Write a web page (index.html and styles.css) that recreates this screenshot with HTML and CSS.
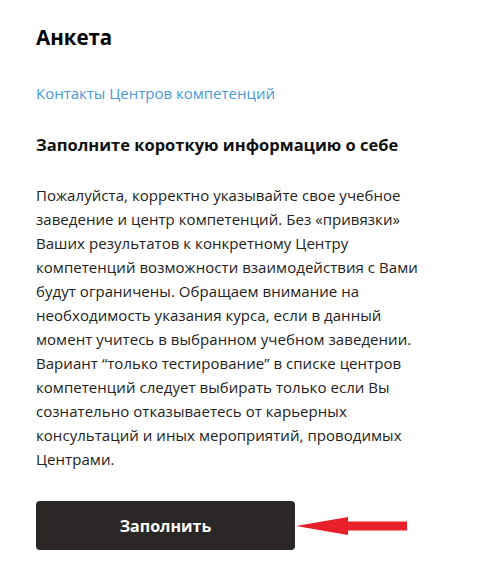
FILE: index.html
```html
<!DOCTYPE html>
<html lang="ru">
    <head>
        <meta charset="UTF-8" />
        <meta name="viewport" content="width=device-width, initial-scale=1.0" />
        <title>Анкета</title>
        <link rel="stylesheet" href="styles.css">
    </head>
    <body>
        <main class="survey">
            <h1 class="survey-title">Анкета</h1>
            <a class="survey-link" href="#">Контакты Центров компетенций</a>
            <h2 class="survey-subtitle">Заполните короткую информацию о себе</h2>
            <p class="survey-text">
                Пожалуйста, корректно указывайте свое учебное заведение и центр компетенций.
                Без «привязки» Ваших результатов к конкретному Центру компетенций возможности
                взаимодействия с Вами будут ограничены. Обращаем внимание на необходимость
                указания курса, если в данный момент учитесь в выбранном учебном заведении.
                Вариант “только тестирование” в списке центров компетенций следует выбирать
                только если Вы сознательно отказываетесь от карьерных консультаций и иных
                мероприятий, проводимых Центрами.
            </p>
            <div class="survey-action">
                <button class="fill-button" type="button">Заполнить</button>
                <svg class="arrow" width="112" height="18" viewBox="0 0 112 18">
                    <polygon points="0,9 52,0 52,4.5 111,4.5 111,13.5 52,13.5 52,18" fill="#e8202a" />
                </svg>
            </div>
        </main>
    </body>
</html>
```

FILE: styles.css
```css
* {
    margin: 0;
    padding: 0;
    box-sizing: border-box;
}
body {
    font-family: "Open Sans", "DejaVu Sans", sans-serif;
    background: #ffffff;
    color: #222222;
}
.survey {
    display: flex;
    flex-direction: column;
    align-items: flex-start;
    padding: 23px 36px 0;
}
.survey-title {
    color: #000000;
    font-size: 20.5px;
    font-weight: 700;
    line-height: 28px;
}
.survey-link {
    margin-top: 32px;
    color: #4a9ad8;
    font-size: 15px;
    line-height: 20px;
    text-decoration: none;
}
.survey-subtitle {
    margin-top: 30px;
    color: #111111;
    font-size: 16.5px;
    font-weight: 700;
    line-height: 24px;
}
.survey-text {
    margin-top: 26px;
    width: 395px;
    font-size: 15px;
    letter-spacing: 0.05px;
    line-height: 24px;
}
.survey-action {
    display: flex;
    align-items: center;
    margin-top: 30px;
}
.fill-button {
    width: 259px;
    height: 49px;
    border: none;
    border-radius: 4px;
    background: #2b2726;
    color: #ffffff;
    font-family: inherit;
    font-size: 16px;
    font-weight: 700;
    cursor: pointer;
}
.arrow {
    display: block;
    margin-left: 1px;
}
```
